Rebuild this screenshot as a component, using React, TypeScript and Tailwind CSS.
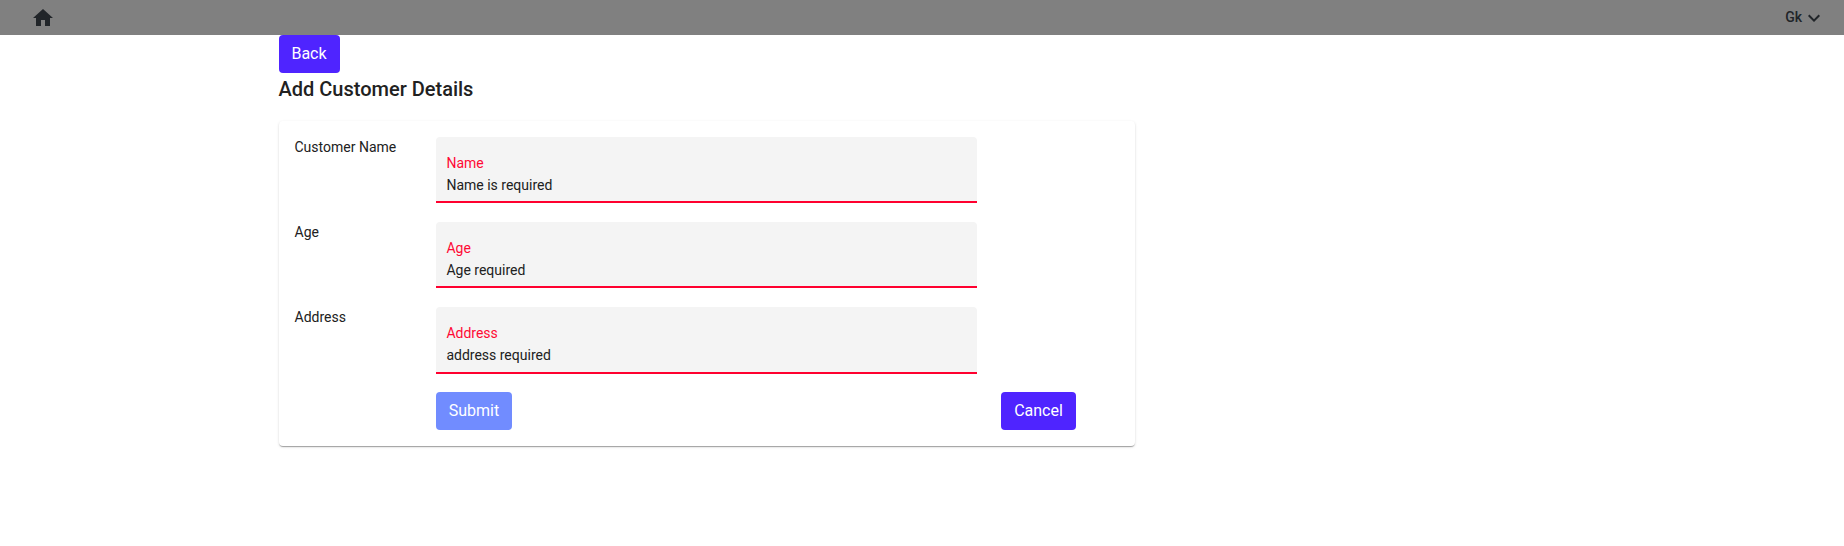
import React from "react";

interface FieldRow {
  label: string;
  placeholder: string;
  error: string;
  height: string;
}

const rows: FieldRow[] = [
  { label: "Customer Name", placeholder: "Name", error: "Name is required", height: "h-[66px]" },
  { label: "Age", placeholder: "Age", error: "Age required", height: "h-[66px]" },
  { label: "Address", placeholder: "Address", error: "address required", height: "h-[67px]" },
];

function Button({ children, className }: { children: React.ReactNode; className: string }) {
  return (
    <button className={`h-[38px] rounded-[4px] text-center text-base leading-6 text-white ${className}`}>
      {children}
    </button>
  );
}

function Header() {
  return (
    <header className="flex h-[35px] items-start justify-between bg-[#808080] pr-[18px] pl-[31px] text-[#212529]">
      <svg className="mt-[6px] size-6" viewBox="0 0 24 24" fill="currentColor">
        <path d="M10 20v-6h4v6h5v-8h3L12 3 2 12h3v8z" />
      </svg>
      <div className="flex text-sm font-medium">
        <span className="mt-[7px] leading-5">Gk</span>
        <svg className="mt-[6px] size-6" viewBox="0 0 24 24" fill="currentColor">
          <path d="M16.59 8.59L12 13.17 7.41 8.59 6 10l6 6 6-6z" />
        </svg>
      </div>
    </header>
  );
}

function Row({ label, placeholder, error, height }: FieldRow) {
  return (
    <div className="flex h-[85px] items-start">
      <div className="-ml-[0.5px] w-[141.5px] pt-px leading-[18px]">{label}</div>
      <div className={`w-[541px] rounded-t-[4px] border-b-2 border-[#ff002f] bg-[#f4f4f4] pr-[10px] pl-[10.4px] pt-[15px] ${height}`}>
        <div className="leading-[22px] text-[#ff0a35]">{placeholder}</div>
        <div className="leading-[22px]">{error}</div>
      </div>
    </div>
  );
}

export default function App() {
  return (
    <div className="min-h-[546px] bg-white font-[Roboto,sans-serif] text-sm text-[#212529]">
      <Header />
      <main className="ml-[279px] w-[856px]">
        <Button className="block w-[61px] bg-[#4f24ff] pr-px">Back</Button>
        <h2 className="-ml-[0.5px] h-12 pt-1 text-[20px] leading-6 font-medium text-[#212121]">Add Customer Details</h2>
        <section className="h-[325px] rounded-[4px] bg-white p-4 text-[#212121] shadow-[0_2px_1px_-1px_rgba(0,0,0,0.2),0_1px_1px_0_rgba(0,0,0,0.14),0_1px_3px_0_rgba(0,0,0,0.12)]">
          {rows.map((row) => (
            <Row key={row.label} {...row} />
          ))}
          <div className="flex">
            <Button className="ml-[141px] w-[76px] bg-[#718cff]">Submit</Button>
            <Button className="ml-[489px] w-[75px] bg-[#4f24ff]">Cancel</Button>
          </div>
        </section>
      </main>
    </div>
  );
}
